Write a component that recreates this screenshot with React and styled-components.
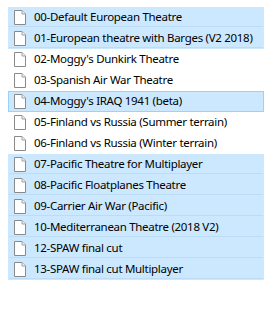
import styled, { createGlobalStyle } from 'styled-components';

const items = [
  { name: '00-Default European Theatre', selected: true },
  { name: '01-European theatre with Barges (V2 2018)', selected: true },
  { name: "02-Moggy's Dunkirk Theatre" },
  { name: '03-Spanish Air War Theatre' },
  { name: "04-Moggy's IRAQ 1941 (beta)", selected: true, focused: true },
  { name: '05-Finland vs Russia (Summer terrain)' },
  { name: '06-Finland vs Russia (Winter terrain)' },
  { name: '07-Pacific Theatre for Multiplayer', selected: true },
  { name: '08-Pacific Floatplanes Theatre', selected: true },
  { name: '09-Carrier Air War (Pacific)', selected: true },
  { name: '10-Mediterranean Theatre (2018 V2)', selected: true },
  { name: '12-SPAW final cut', selected: true },
  { name: '13-SPAW final cut Multiplayer', selected: true },
];

const GlobalStyle = createGlobalStyle`
  body {
    margin: 0;
    background: #ffffff;
    font-family: "Noto Sans", "Open Sans", sans-serif;
  }
`;

const List = styled.ul`
  list-style: none;
  margin: 0;
  padding: 7px 4px 0 8px;
  display: flex;
  flex-direction: column;
`;

const Row = styled.li`
  box-sizing: border-box;
  height: 21px;
  display: flex;
  align-items: center;
  gap: 8px;
  padding-left: 5px;
  font-size: 11.5px;
  letter-spacing: -0.3px;
  color: #000;
  background: ${(p) => (p.$selected ? '#cce8ff' : '#ffffff')};
  border: 1px solid
    ${(p) => (p.$focused ? '#99d1ff' : p.$selected ? '#cce8ff' : '#ffffff')};
  box-shadow: ${(p) => (p.$selected && !p.$focused ? 'inset 0 -1px 0 #bcdcf5' : 'none')};
`;

const Icon = styled.svg`
  flex-shrink: 0;
`;

const Label = styled.span`
  white-space: nowrap;
  line-height: 1;
  padding-bottom: 1px;
`;

function FileIcon() {
  return (
    <Icon width="12" height="15" viewBox="0 0 12 15">
      <path
        d="M0.5 0.5 H8 L11.5 4 V14.5 H0.5 Z"
        fill="#ffffff"
        stroke="#8a8a8a"
        strokeWidth="1"
      />
      <path d="M8 0.5 V4 H11.5" fill="#f0f0f0" stroke="#a0a0a0" strokeWidth="1" />
    </Icon>
  );
}

export default function App() {
  return (
    <>
      <GlobalStyle />
      <List>
        {items.map((item) => (
          <Row key={item.name} $selected={item.selected} $focused={item.focused}>
            <FileIcon />
            <Label>{item.name}</Label>
          </Row>
        ))}
      </List>
    </>
  );
}
